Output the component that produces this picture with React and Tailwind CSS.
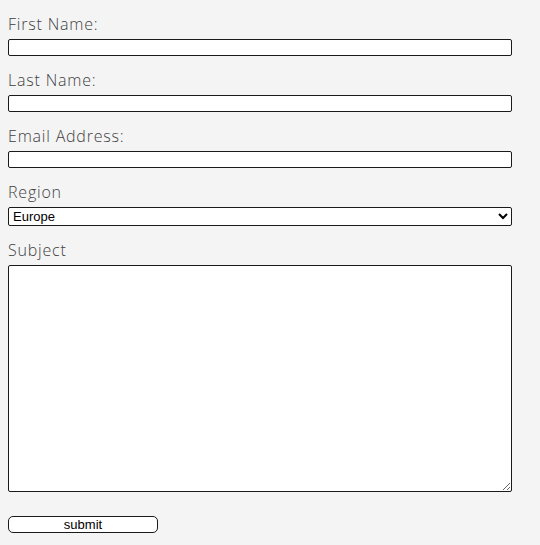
import React, { useState } from "react";

const labelCls =
  "block text-base leading-6 font-light tracking-[0.05em] text-[#3f3f3f] font-['Open_Sans',sans-serif]";
const inputCls =
  "block w-[504px] mt-[3px] bg-white border border-[#1a1a1a] rounded-[2px] px-[2px] text-[13px] text-black outline-none font-['Liberation_Sans',Arial,sans-serif]";

const App = () => {
  const [form, setForm] = useState({
    first: "",
    last: "",
    email: "",
    region: "europe",
    subject: "",
  });

  const update = (key) => (e) => setForm({ ...form, [key]: e.target.value });

  return (
    <div className="min-h-[545px] bg-[#f4f4f4] px-2 pt-3">
      <form onSubmit={(e) => e.preventDefault()}>
        {/* First name */}
        <div className="mb-3">
          <label className={labelCls}>First Name:</label>
          <input
            type="text"
            value={form.first}
            onChange={update("first")}
            className={`${inputCls} h-[17px]`}
          />
        </div>

        {/* Last name */}
        <div className="mb-3">
          <label className={labelCls}>Last Name:</label>
          <input
            type="text"
            value={form.last}
            onChange={update("last")}
            className={`${inputCls} h-[17px]`}
          />
        </div>

        {/* Email */}
        <div className="mb-3">
          <label className={labelCls}>Email Address:</label>
          <input
            type="email"
            value={form.email}
            onChange={update("email")}
            className={`${inputCls} h-[17px]`}
          />
        </div>

        {/* Region */}
        <div className="mb-3">
          <label className={labelCls}>Region</label>
          <select
            value={form.region}
            onChange={update("region")}
            className={`${inputCls} h-[19px] pl-0`}
          >
            <option value="europe">Europe</option>
            <option value="asia">Asia</option>
            <option value="africa">Africa</option>
            <option value="america">America</option>
          </select>
        </div>

        {/* Subject */}
        <div>
          <label className={labelCls}>Subject</label>
          <textarea
            value={form.subject}
            onChange={update("subject")}
            className={`${inputCls} h-[227px]`}
          />
        </div>

        <button
          type="submit"
          className="block mt-6 w-[150px] h-[17px] bg-white border border-[#1a1a1a] rounded-[5px] text-[13px] leading-[15px] text-black font-['Liberation_Sans',Arial,sans-serif]"
        >
          submit
        </button>
      </form>
    </div>
  );
};

export default App;
